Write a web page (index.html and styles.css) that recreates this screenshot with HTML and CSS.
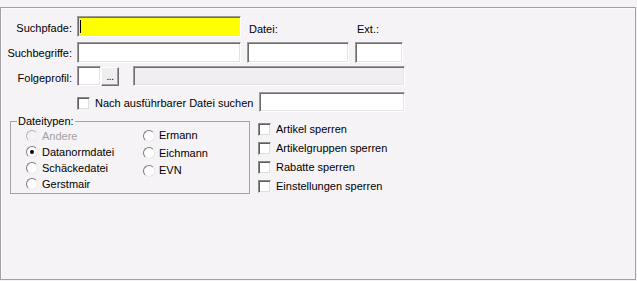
FILE: index.html
```html
<!DOCTYPE html>
<html lang="de">
<head>
<meta charset="utf-8">
<title>Suchprofil</title>
<link rel="stylesheet" href="styles.css">
</head>
<body>
<div class="panel">
  <div class="row r1">
    <span class="lbl">Suchpfade:</span>
    <div class="field w164 active"><span class="caret"></span></div>
    <span class="cap w102">Datei:</span>
    <span class="cap w48">Ext.:</span>
  </div>
  <div class="row r2">
    <span class="lbl lbl-mid">Suchbegriffe:</span>
    <div class="field w164"></div>
    <div class="field w102"></div>
    <div class="field w48"></div>
  </div>
  <div class="row r3">
    <span class="lbl">Folgeprofil:</span>
    <div class="field w24"></div>
    <div class="btn">...</div>
    <div class="field w272 disabled"></div>
  </div>
  <div class="row r4">
    <span class="check"></span>
    <span class="check-text">Nach ausführbarer Datei suchen</span>
    <div class="field w146"></div>
  </div>
  <div class="lower">
    <fieldset class="group">
      <legend>Dateitypen:</legend>
      <div class="radios">
        <div class="col col1">
          <div class="opt off"><span class="radio"></span><span>Andere</span></div>
          <div class="opt"><span class="radio checked"></span><span>Datanormdatei</span></div>
          <div class="opt"><span class="radio"></span><span>Schäckedatei</span></div>
          <div class="opt"><span class="radio"></span><span>Gerstmair</span></div>
        </div>
        <div class="col col2">
          <div class="opt"><span class="radio"></span><span>Ermann</span></div>
          <div class="opt"><span class="radio"></span><span>Eichmann</span></div>
          <div class="opt"><span class="radio"></span><span>EVN</span></div>
        </div>
      </div>
    </fieldset>
    <div class="locks">
      <div class="lock"><span class="check"></span><span>Artikel sperren</span></div>
      <div class="lock"><span class="check"></span><span>Artikelgruppen sperren</span></div>
      <div class="lock"><span class="check"></span><span>Rabatte sperren</span></div>
      <div class="lock"><span class="check"></span><span>Einstellungen sperren</span></div>
    </div>
  </div>
</div>
</body>
</html>
```

FILE: styles.css
```css
html, body {
  margin: 0;
  padding: 0;
  background: #f6f3f6;
}
body {
  font-family: "Liberation Sans", Arial, sans-serif;
  font-size: 11px;
  line-height: 13px;
  color: #000;
  width: 637px;
  height: 281px;
  overflow: hidden;
}
.panel {
  margin-top: 7px;
  width: 636px;
  height: 273px;
  box-sizing: border-box;
  border: 1px solid #a0a0a0;
  box-shadow: inset 1px 1px 0 #fdfcfd;
  background: #f6f3f6;
}
.row {
  display: flex;
  align-items: flex-start;
}
.r1 { margin-top: 8px; height: 21px; }
.r2 { margin-top: 5px; height: 21px; }
.r3 { margin-top: 3px; height: 20px; }
.r4 { margin-top: 6px; height: 20px; margin-left: 76px; width: 328px; }

.lbl {
  width: 71px;
  margin-right: 5px;
  text-align: right;
  padding-top: 6px;
  white-space: nowrap;
}
.lbl-mid { padding-top: 5px; }

.field {
  box-sizing: border-box;
  height: 100%;
  background: #fff;
  border: 1px solid;
  border-color: #9a9a9a #fff #fff #9a9a9a;
  box-shadow: inset 1px 1px 0 #6d6d6d, inset -1px -1px 0 #e6e3e6;
  position: relative;
}
.field + .field { margin-left: 6px; }
.w164 { width: 164px; }
.w102 { width: 102px; }
.w48 { width: 48px; }
.w24 { width: 24px; }
.w272 { width: 272px; }
.w146 { width: 146px; margin-left: auto; }
.active { background: #ffff00; }
.disabled { background: #f0eef0; }
.r3 .disabled { margin-left: 14px; }

.caret {
  position: absolute;
  left: 2px;
  top: 3px;
  width: 1px;
  height: 13px;
  background: #000;
}

.cap {
  box-sizing: border-box;
  margin-left: 6px;
  padding-left: 2px;
  padding-top: 7px;
}
.cap.w102 { width: 102px; }
.cap.w48 { width: 48px; }

.btn {
  box-sizing: border-box;
  width: 18px;
  height: 19px;
  margin-top: 1px;
  background: #f0eff0;
  border: 1px solid;
  border-color: #fff #6d6d6d #6d6d6d #fff;
  box-shadow: inset -1px -1px 0 #a0a0a0;
  text-align: center;
  font-size: 10px;
  line-height: 17px;
  letter-spacing: -0.5px;
}

.check {
  box-sizing: border-box;
  display: inline-block;
  flex: none;
  width: 13px;
  height: 13px;
  background: #fff;
  border: 1px solid;
  border-color: #8a8a8a #f4f4f4 #f4f4f4 #8a8a8a;
  box-shadow: inset 1px 1px 0 #5f5f5f, inset -1px -1px 0 #dedede;
}
.r4 .check { margin-top: 5px; }
.check-text {
  margin-left: 5px;
  padding-top: 5px;
  white-space: nowrap;
}

.lower {
  display: flex;
  align-items: flex-start;
  margin-top: 3px;
}
.group {
  box-sizing: border-box;
  margin: 0 0 0 9px;
  width: 240px;
  height: 79px;
  padding: 0 0 0 6px;
  border: 1px solid #a4a4a4;
  min-inline-size: 0;
}
.group legend {
  padding: 0 1px;
  line-height: 13px;
}
.radios {
  display: flex;
  padding-left: 9px;
}
.col1 { width: 117px; }
.col1 .opt { height: 16px; }
.col2 { margin-top: -1px; }
.col2 .opt { height: 17.5px; }
.opt {
  display: flex;
  align-items: center;
  gap: 4px;
  white-space: nowrap;
}
.opt.off { color: #a2a2a2; }
.radio {
  box-sizing: border-box;
  display: inline-block;
  flex: none;
  width: 12px;
  height: 12px;
  border-radius: 50%;
  background: #fff;
  border: 1px solid;
  border-color: #7a7a7a #e8e8e8 #e8e8e8 #7a7a7a;
  position: relative;
}
.opt.off .radio {
  border-color: #b4b4b4 #eeeeee #eeeeee #b4b4b4;
  background: #f6f3f6;
}
.radio.checked::after {
  content: "";
  position: absolute;
  left: 3px;
  top: 3px;
  width: 4px;
  height: 4px;
  border-radius: 50%;
  background: #000;
}

.locks {
  margin-left: 8px;
  padding-top: 5px;
}
.lock {
  display: flex;
  align-items: center;
  gap: 5px;
  height: 19px;
  white-space: nowrap;
}
```
